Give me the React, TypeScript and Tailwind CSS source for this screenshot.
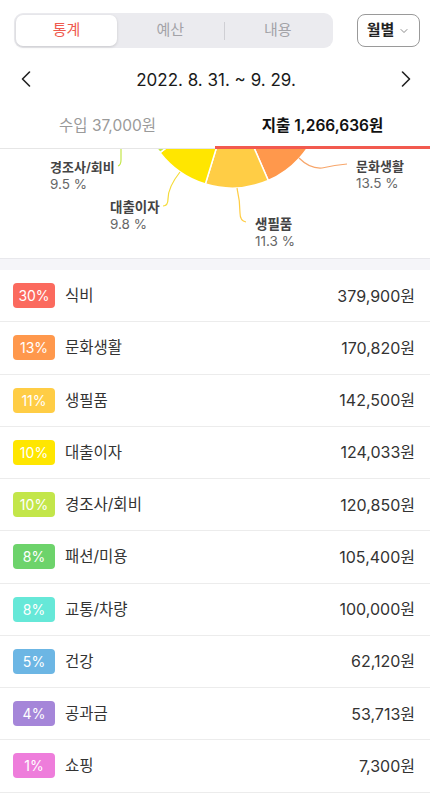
import { ChevronLeft, ChevronRight, ChevronDown } from "lucide-react";

interface Category {
    name: string;
    amount: number;
    color: string;
    badge: string;
}

const categories: Category[] = [
    { name: "식비", amount: 379900, color: "#fb6a5e", badge: "bg-[#fb6a5e]" },
    { name: "문화생활", amount: 170820, color: "#ff984c", badge: "bg-[#ff984c]" },
    { name: "생필품", amount: 142500, color: "#ffcd45", badge: "bg-[#ffcd45]" },
    { name: "대출이자", amount: 124033, color: "#ffe600", badge: "bg-[#ffe600]" },
    { name: "경조사/회비", amount: 120850, color: "#c3e64a", badge: "bg-[#c3e64a]" },
    { name: "패션/미용", amount: 105400, color: "#6dd36b", badge: "bg-[#6dd36b]" },
    { name: "교통/차량", amount: 100000, color: "#66e8d8", badge: "bg-[#66e8d8]" },
    { name: "건강", amount: 62120, color: "#6cb6e4", badge: "bg-[#6cb6e4]" },
    { name: "공과금", amount: 53713, color: "#a586d9", badge: "bg-[#a586d9]" },
    { name: "쇼핑", amount: 7300, color: "#ee7ddb", badge: "bg-[#ee7ddb]" },
]

const total = categories.reduce((s, c) => s + c.amount, 0)

const CX = 232
const CY = -52
const R = 91

function point(deg: number) {
    const rad = (deg * Math.PI) / 180
    return [CX + R * Math.sin(rad), CY - R * Math.cos(rad)]
}

function slices() {
    let start = 0
    return categories.map(c => {
        const sweep = (c.amount / total) * 360
        const [x1, y1] = point(start)
        const [x2, y2] = point(start + sweep)
        const large = sweep > 180 ? 1 : 0
        const d = `M${CX},${CY} L${x1},${y1} A${R},${R} 0 ${large} 1 ${x2},${y2} Z`
        start += sweep
        return { d, color: c.color, name: c.name }
    })
}

function PieChart() {
    return (
        <div className="relative h-[109px] bg-white overflow-hidden">
            <svg width="430" height="109" className="absolute left-0 top-0">
                {slices().map(s => (
                    <path key={s.name} d={s.d} fill={s.color} stroke="#ffffff" strokeWidth="1.5" />
                ))}
                <path d="M147,-20 Q121,-20 121,0 L121,11 Q121,16 118,17" fill="none" stroke="#c3e64a" strokeWidth="1.2" />
                <path d="M180,23 Q168,38 168,50 Q168,57 163,57" fill="none" stroke="#f5db3a" strokeWidth="1.2" />
                <path d="M237,39 Q240,52 240,64 Q240,72 246,73" fill="none" stroke="#ffcd45" strokeWidth="1.2" />
                <path d="M299,9 Q310,20 322,19 Q335,16 347,15" fill="none" stroke="#f7a66b" strokeWidth="1.2" />
            </svg>

            <div className="absolute left-[50px] top-[10px] leading-[17px]">
                <div className="text-[13px] font-semibold text-[#444]">경조사/회비</div>
                <div className="text-[13.5px] text-[#666]">9.5 %</div>
            </div>
            <div className="absolute left-[110px] top-[50px] leading-[17px]">
                <div className="text-[13.5px] font-semibold text-[#444]">대출이자</div>
                <div className="text-[13.5px] text-[#666]">9.8 %</div>
            </div>
            <div className="absolute left-[255px] top-[67px] leading-[17px]">
                <div className="text-[13.5px] font-semibold text-[#444]">생필품</div>
                <div className="text-[13.5px] text-[#666]">11.3 %</div>
            </div>
            <div className="absolute left-[356px] top-[9px] leading-[17px]">
                <div className="text-[13px] font-semibold text-[#444]">문화생활</div>
                <div className="text-[13.5px] text-[#666]">13.5 %</div>
            </div>
        </div>
    )
}

function Header() {
    return (
        <div className="bg-white">
            <div className="flex items-center justify-between pt-[13px] pl-[14px] pr-[10px]">
                <div className="flex items-center w-[319px] h-[35px] rounded-[9px] bg-[#ebebef] p-[2px]">
                    <div className="flex items-center justify-center w-[101px] h-full rounded-[7px] bg-white shadow-[0_1px_3px_rgba(0,0,0,0.15)] text-[15px] text-[#ef5a4f]">
                        통계
                    </div>
                    <div className="flex-1 flex items-center justify-center text-[15px] text-[#a3a3a8]">예산</div>
                    <div className="w-px h-[18px] bg-[#cfcfd4]"></div>
                    <div className="flex-1 flex items-center justify-center text-[15px] text-[#a3a3a8]">내용</div>
                </div>
                <div className="flex items-center justify-center gap-[4px] w-[63px] h-[33px] rounded-[8px] border border-[#9a9a9a] text-[15px] font-semibold text-[#222]">
                    월별
                    <ChevronDown size={12} strokeWidth={1.5} className="text-[#666]" />
                </div>
            </div>

            <div className="flex items-center justify-between h-[30px] mt-[16px] pl-[12px] pr-[10px]">
                <ChevronLeft size={28} strokeWidth={1.4} className="text-[#222]" />
                <div className="text-[17px] text-[#1a1a1a] pt-[3px]">2022. 8. 31. ~ 9. 29.</div>
                <ChevronRight size={28} strokeWidth={1.4} className="text-[#222]" />
            </div>

            <div className="flex h-[50px] mt-[5px]">
                <div className="flex-1 flex flex-col">
                    <div className="flex-1 flex items-center justify-center text-[15.5px] text-[#9a9a9a] pt-[6px]">
                        수입 37,000원
                    </div>
                    <div className="h-[3px] border-b border-[#e6e6e6]"></div>
                </div>
                <div className="flex-1 flex flex-col">
                    <div className="flex-1 flex items-center justify-center text-[15.5px] font-semibold text-[#111] pt-[6px]">
                        지출 1,266,636원
                    </div>
                    <div className="h-[3px] bg-[#f25a4f]"></div>
                </div>
            </div>
        </div>
    )
}

export default function App() {
    return (
        <div className="w-[430px] h-[794px] overflow-hidden bg-white font-['Inter','Noto_Sans_CJK_KR',sans-serif]">
            <Header />
            <PieChart />
            <div className="h-[12px] bg-[#f5f5f9] border-t border-[#e8e8ec]"></div>
            <div>
                {categories.map(c => {
                    const pct = Math.round((c.amount / total) * 100)
                    return (
                        <div key={c.name} className="flex items-center h-[52.25px] border-b border-[#ececec] pl-[13px] pr-[15px]">
                            <div className={`${c.badge} w-[42px] h-[25px] rounded-[4px] flex items-center justify-center text-[14px] text-white`}>
                                {pct}%
                            </div>
                            <div className="ml-[10px] text-[15.5px] text-[#333]">{c.name}</div>
                            <div className="ml-auto text-[16px] text-[#333]">{c.amount.toLocaleString("en-US")}원</div>
                        </div>
                    )
                })}
            </div>
        </div>
    )
}
